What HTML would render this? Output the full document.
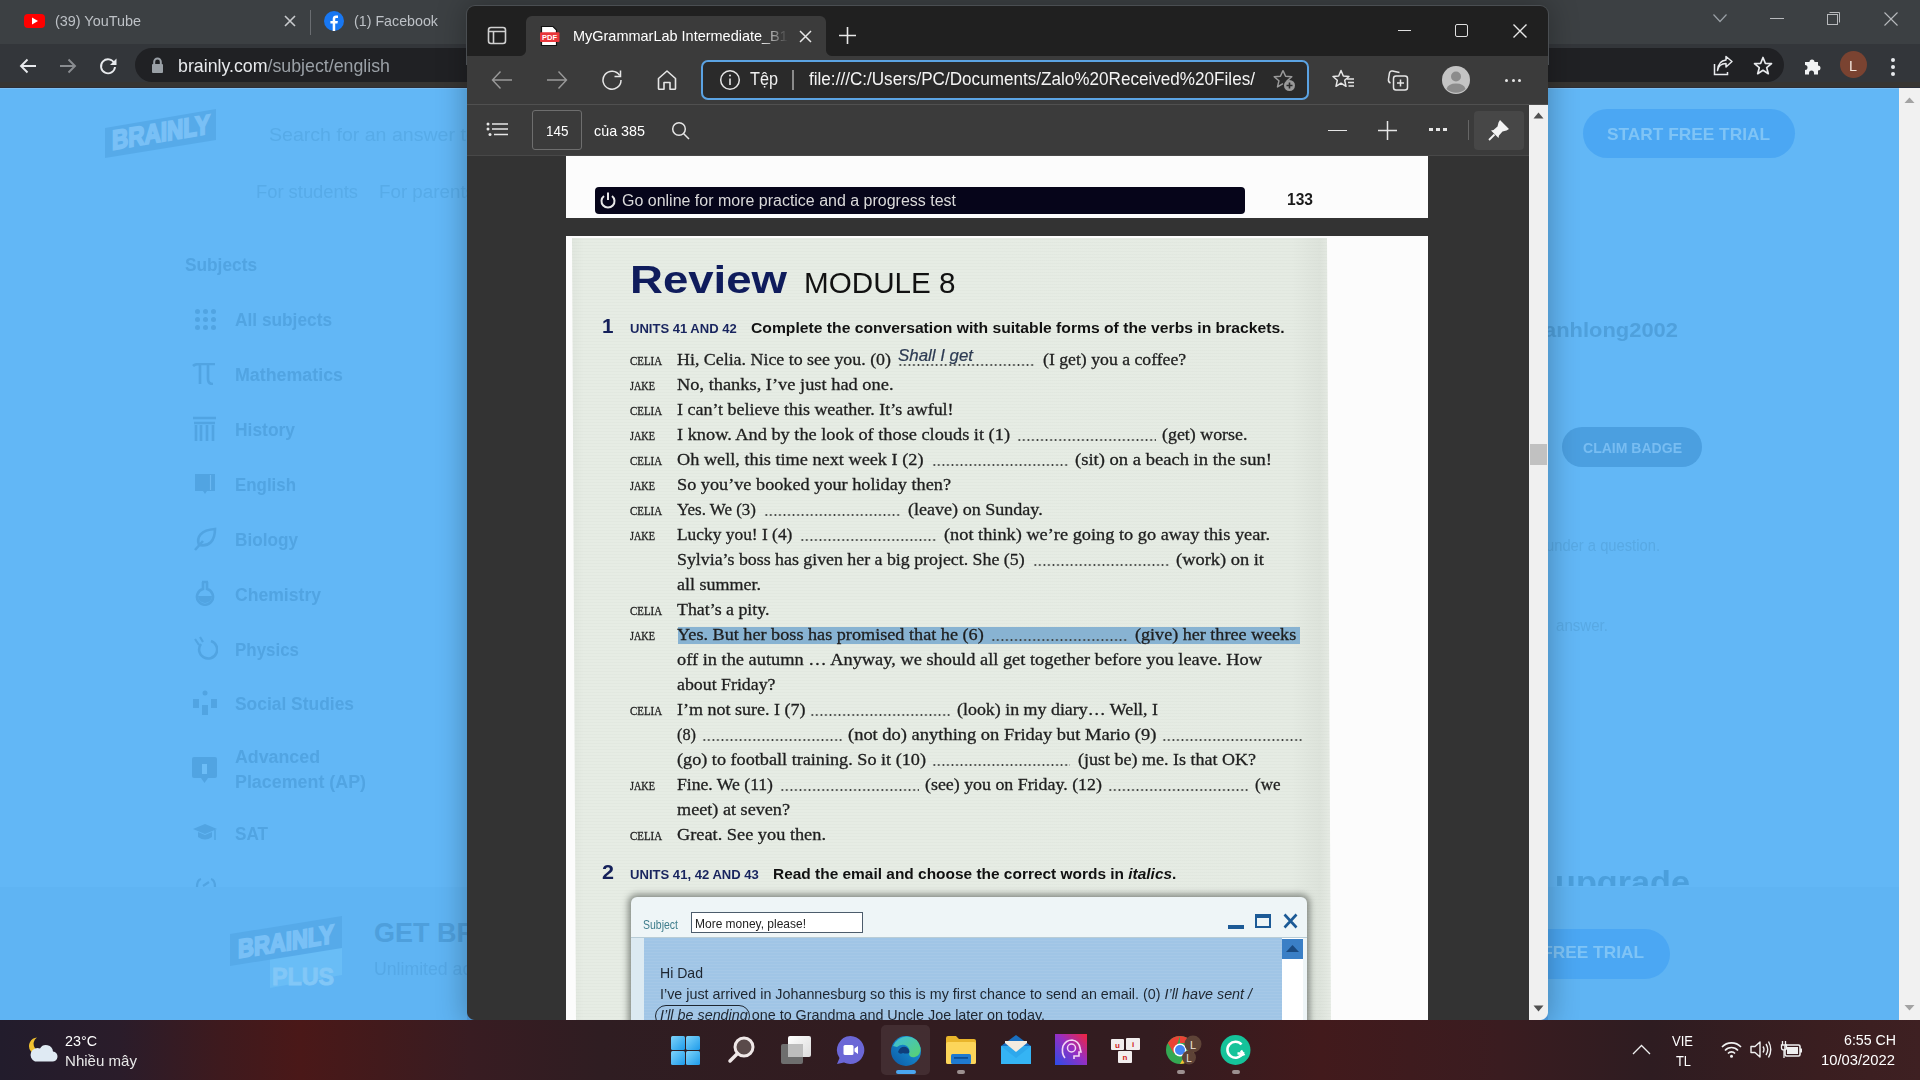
<!DOCTYPE html>
<html><head><meta charset="utf-8"><title>screen</title>
<style>
html,body{margin:0;padding:0;width:1920px;height:1080px;overflow:hidden;background:#62b7f6;position:relative;font-family:"Liberation Sans",sans-serif}
</style></head><body>
<div style="position:absolute;left:0px;top:0px;width:1920px;height:44px;background:#3c4043"></div><div style="position:absolute;left:0px;top:44px;width:1920px;height:38px;background:#33363a"></div><div style="position:absolute;left:0px;top:82px;width:1920px;height:6px;background:#373532"></div><div style="position:absolute;left:0px;top:87px;width:1920px;height:1px;background:#2c2f3a"></div><div style="position:absolute;left:24px;top:14px;width:21px;height:14px;background:#f00;border-radius:4px"></div><svg style="position:absolute;left:31px;top:17px" width="8" height="8"><path d="M1 0.5 L7 4 L1 7.5Z" fill="#fff"/></svg><span style="position:absolute;left:55px;top:11.80px;white-space:pre;line-height:15px;font:400 15px 'Liberation Sans', sans-serif;color:#bdc1c6;transform-origin:0 0;transform:scaleX(0.9606);">(39) YouTube</span><svg style="position:absolute;left:284px;top:15px" width="12" height="12"><path d="M1 1L11 11M11 1L1 11" stroke="#c8cacd" stroke-width="1.6"/></svg><div style="position:absolute;left:310px;top:10px;width:1px;height:25px;background:#6a6d71"></div><svg style="position:absolute;left:324px;top:11px" width="20" height="20" viewBox="0 0 20 20"><circle cx="10" cy="10" r="10" fill="#1877f2"/><path d="M11.2 20V12.6h2.3l.4-2.7h-2.7V8.2c0-.8.3-1.3 1.4-1.3h1.4V4.5c-.3 0-1.1-.1-2-.1-2 0-3.3 1.200-3.3 3.4v2.1H6.400v2.700h2.300V20z" fill="#fff"/></svg><span style="position:absolute;left:354px;top:11.80px;white-space:pre;line-height:15px;font:400 15px 'Liberation Sans', sans-serif;color:#bdc1c6;transform-origin:0 0;transform:scaleX(0.9505);">(1) Facebook</span><svg style="position:absolute;left:1712px;top:13px" width="16" height="11"><path d="M1.5 1.5L8 8.5L14.5 1.5" stroke="#9aa0a6" fill="none" stroke-width="1.2"/></svg><div style="position:absolute;left:1770px;top:18px;width:14px;height:1px;background:#b8babd"></div><svg style="position:absolute;left:1826px;top:11px" width="16" height="16"><rect x="1.5" y="3.5" width="10" height="10" fill="none" stroke="#b8babd" stroke-width="1"/><path d="M3.5 1.5H13.5V11.5" fill="none" stroke="#b8babd" stroke-width="1"/></svg><svg style="position:absolute;left:1883px;top:11px" width="16" height="16"><path d="M1.5 1.5L14.5 14.5M14.5 1.5L1.5 14.5" stroke="#b8babd" stroke-width="1.1"/></svg><svg style="position:absolute;left:17px;top:55px" width="22" height="22" viewBox="0 0 22 22"><path d="M19 11H4M10.5 4.5L4 11L10.5 17.5" stroke="#e8eaed" stroke-width="1.9" fill="none"/></svg><svg style="position:absolute;left:57px;top:55px" width="22" height="22" viewBox="0 0 22 22"><path d="M3 11H18M11.5 4.5L18 11L11.5 17.5" stroke="#8a8d91" stroke-width="1.9" fill="none"/></svg><svg style="position:absolute;left:97px;top:55px" width="22" height="22" viewBox="0 0 22 22"><path d="M17.3 8.2A7 7 0 1 0 18 12" stroke="#e8eaed" stroke-width="1.9" fill="none"/><path d="M19.5 3.5V10H13Z" fill="#e8eaed"/></svg><div style="position:absolute;left:135px;top:48px;width:1649px;height:34px;background:#202124;border-radius:17px"></div><svg style="position:absolute;left:151px;top:57px" width="13" height="17" viewBox="0 0 13 17"><path d="M3.2 7V4.8a3.3 3.300 0 0 1 6.600 0V7" stroke="#9aa0a6" stroke-width="2" fill="none"/><rect x="1" y="7" width="11" height="9" rx="1" fill="#9aa0a6"/></svg><span style="position:absolute;left:178px;top:55.12px;white-space:pre;line-height:19px;font:400 19px 'Liberation Sans', sans-serif;color:#9aa0a6;transform-origin:0 0;transform:scaleX(0.9351);"><span style="color:#e8eaed">brainly.com</span>/subject/english</span><svg style="position:absolute;left:1712px;top:55px" width="22" height="22" viewBox="0 0 22 22"><path d="M2.5 9V19.500H15.5V17" stroke="#e8eaed" stroke-width="1.5" fill="none"/><path d="M5.5 15.5C6.500 10.500 10 8.500 14 8.500V12L20 6.500L14 1.500V5C9 5.500 6 9 5.500 15.500Z" stroke="#e8eaed" stroke-width="1.5" fill="none" stroke-linejoin="round"/></svg><svg style="position:absolute;left:1752px;top:55px" width="22" height="22" viewBox="0 0 22 22"><path d="M11 2.5L13.300 8.300L19.500 8.700L14.700 12.600L16.300 18.700L11 15.300L5.700 18.700L7.300 12.600L2.500 8.700L8.700 8.300Z" stroke="#e8eaed" stroke-width="1.7" fill="none" stroke-linejoin="round"/></svg><svg style="position:absolute;left:1802px;top:55px" width="22" height="22" viewBox="0 0 22 22"><path d="M3 7H7.500A2.500 2.500 0 1 1 12.500 7H16V10.500A2.500 2.500 0 1 1 16 15.500V19.500H12V18A2.500 2.500 0 1 0 7 18V19.500H3V15A2.500 2.500 0 1 0 3 10Z" fill="#f1f3f4"/></svg><div style="position:absolute;left:1840px;top:51px;width:27px;height:27px;background:#7a4331;border-radius:50%"></div><span style="position:absolute;left:1849px;top:57.30px;white-space:pre;line-height:15px;font:400 15px 'Liberation Sans', sans-serif;color:#f3e6dc;transform-origin:0 0;transform:scaleX(0.9588);">L</span><div style="position:absolute;left:1891px;top:58px;width:4px;height:4px;background:#e8eaed;border-radius:50%"></div><div style="position:absolute;left:1891px;top:65px;width:4px;height:4px;background:#e8eaed;border-radius:50%"></div><div style="position:absolute;left:1891px;top:72px;width:4px;height:4px;background:#e8eaed;border-radius:50%"></div><div style="position:absolute;left:1899px;top:88px;width:21px;height:932px;background:#f1f1f1"></div><svg style="position:absolute;left:1904px;top:96px" width="11" height="8"><path d="M0.5 7L5.500 1.500L10.500 7Z" fill="#a3a3a3"/></svg><svg style="position:absolute;left:1904px;top:1004px" width="11" height="8"><path d="M0.5 1L5.500 6.500L10.500 1Z" fill="#a3a3a3"/></svg><div style="position:absolute;left:0px;top:88px;width:1899px;height:932px;background:#62b7f6"></div><div style="position:absolute;left:0px;top:887px;width:1899px;height:133px;background:#5fb4f3"></div><div style="position:absolute;left:0px;top:88px;width:1899px;height:1px;background:#7cbff2"></div><svg style="position:absolute;left:100px;top:105px" width="125" height="60" viewBox="100 105 125 60"><path d="M105 128L216 109L216 140L105 158Z" fill="#56aae9"/><text x="112" y="150" transform="skewY(-9.5) translate(0 18.5)" font-family="Liberation Sans" font-weight="700" font-size="27" fill="#79c0f6" stroke="#79c0f6" stroke-width="2" textLength="98" lengthAdjust="spacingAndGlyphs">BRAINLY</text></svg><span style="position:absolute;left:269px;top:123.92px;white-space:pre;line-height:19px;font:400 19px 'Liberation Sans', sans-serif;color:#57abe8;transform-origin:0 0;transform:scaleX(1.03);">Search for an answer to any question...</span><span style="position:absolute;left:256px;top:181.76px;white-space:pre;line-height:18px;font:400 18px 'Liberation Sans', sans-serif;color:#57abe8;transform-origin:0 0;transform:scaleX(1.0195);">For students</span><span style="position:absolute;left:379px;top:181.76px;white-space:pre;line-height:18px;font:400 18px 'Liberation Sans', sans-serif;color:#57abe8;transform-origin:0 0;transform:scaleX(1.0429);">For parents</span><span style="position:absolute;left:185px;top:255.46px;white-space:pre;line-height:18px;font:700 18px 'Liberation Sans', sans-serif;color:#51a4e2;transform-origin:0 0;transform:scaleX(0.9596);">Subjects</span><span style="position:absolute;left:235px;top:310.46px;white-space:pre;line-height:18px;font:700 18px 'Liberation Sans', sans-serif;color:#51a4e2;transform-origin:0 0;transform:scaleX(0.9601);">All subjects</span><span style="position:absolute;left:235px;top:365.46px;white-space:pre;line-height:18px;font:700 18px 'Liberation Sans', sans-serif;color:#51a4e2;transform-origin:0 0;transform:scaleX(0.9904);">Mathematics</span><span style="position:absolute;left:235px;top:420.46px;white-space:pre;line-height:18px;font:700 18px 'Liberation Sans', sans-serif;color:#51a4e2;transform-origin:0 0;transform:scaleX(0.9675);">History</span><span style="position:absolute;left:235px;top:475.46px;white-space:pre;line-height:18px;font:700 18px 'Liberation Sans', sans-serif;color:#51a4e2;transform-origin:0 0;transform:scaleX(0.9382);">English</span><span style="position:absolute;left:235px;top:530.46px;white-space:pre;line-height:18px;font:700 18px 'Liberation Sans', sans-serif;color:#51a4e2;transform-origin:0 0;transform:scaleX(0.9545);">Biology</span><span style="position:absolute;left:235px;top:585.46px;white-space:pre;line-height:18px;font:700 18px 'Liberation Sans', sans-serif;color:#51a4e2;transform-origin:0 0;transform:scaleX(0.9769);">Chemistry</span><span style="position:absolute;left:235px;top:640.46px;white-space:pre;line-height:18px;font:700 18px 'Liberation Sans', sans-serif;color:#51a4e2;transform-origin:0 0;transform:scaleX(0.9405);">Physics</span><span style="position:absolute;left:235px;top:694.16px;white-space:pre;line-height:18px;font:700 18px 'Liberation Sans', sans-serif;color:#51a4e2;transform-origin:0 0;transform:scaleX(0.9671);">Social Studies</span><span style="position:absolute;left:235px;top:824.46px;white-space:pre;line-height:18px;font:700 18px 'Liberation Sans', sans-serif;color:#51a4e2;transform-origin:0 0;transform:scaleX(0.9518);">SAT</span><span style="position:absolute;left:235px;top:746.76px;white-space:pre;line-height:18px;font:700 18px 'Liberation Sans', sans-serif;color:#51a4e2;transform-origin:0 0;transform:scaleX(0.9880);">Advanced</span><span style="position:absolute;left:235px;top:771.56px;white-space:pre;line-height:18px;font:700 18px 'Liberation Sans', sans-serif;color:#51a4e2;transform-origin:0 0;transform:scaleX(0.9921);">Placement (AP)</span><div style="position:absolute;left:195px;top:309px;width:5px;height:5px;background:#51a4e2;border-radius:50%"></div><div style="position:absolute;left:195px;top:317px;width:5px;height:5px;background:#51a4e2;border-radius:50%"></div><div style="position:absolute;left:195px;top:325px;width:5px;height:5px;background:#51a4e2;border-radius:50%"></div><div style="position:absolute;left:203px;top:309px;width:5px;height:5px;background:#51a4e2;border-radius:50%"></div><div style="position:absolute;left:203px;top:317px;width:5px;height:5px;background:#51a4e2;border-radius:50%"></div><div style="position:absolute;left:203px;top:325px;width:5px;height:5px;background:#51a4e2;border-radius:50%"></div><div style="position:absolute;left:211px;top:309px;width:5px;height:5px;background:#51a4e2;border-radius:50%"></div><div style="position:absolute;left:211px;top:317px;width:5px;height:5px;background:#51a4e2;border-radius:50%"></div><div style="position:absolute;left:211px;top:325px;width:5px;height:5px;background:#51a4e2;border-radius:50%"></div><svg style="position:absolute;left:192px;top:363px" width="24" height="22"><path d="M1 3Q3 1 7 1H23M8 1V21M16 1V16Q16 21 21 21" stroke="#51a4e2" stroke-width="2.6" fill="none"/></svg><svg style="position:absolute;left:193px;top:416px" width="23" height="26"><path d="M0 2H23M1 7H22M3 9V25M8 9V25M14 9V25M20 9V25" stroke="#51a4e2" stroke-width="2.6" fill="none"/></svg><svg style="position:absolute;left:195px;top:474px" width="21" height="21"><path d="M0 0H20V17H12L10 20L8 17H0Z" fill="#51a4e2"/><path d="M15.500 1V16" stroke="#6ab9f4" stroke-width="1.200"/></svg><svg style="position:absolute;left:193px;top:527px" width="24" height="24"><path d="M2 23L10 14M6 18C3 10 8 3 22 2C22 14 16 20 6 18Z" stroke="#51a4e2" stroke-width="2.6" fill="none"/></svg><svg style="position:absolute;left:194px;top:580px" width="22" height="26"><path d="M8 2H14M9 2V9A8 8 0 1 0 13 9V2" stroke="#51a4e2" stroke-width="2.6" fill="none"/><path d="M4 16H18A7 7 0 0 1 4 16Z" fill="#51a4e2"/></svg><svg style="position:absolute;left:193px;top:636px" width="25" height="26"><path d="M8 8A9 9 0 1 0 18 5" stroke="#51a4e2" stroke-width="2.6" fill="none"/><path d="M2 3L6 9M7 1L10 6" stroke="#51a4e2" stroke-width="2.2"/></svg><svg style="position:absolute;left:192px;top:690px" width="26" height="26"><circle cx="13" cy="3" r="2.5" fill="#51a4e2"/><rect x="1" y="9" width="6" height="9" fill="#51a4e2"/><rect x="19" y="9" width="6" height="9" fill="#51a4e2"/><rect x="10" y="15" width="6" height="10" fill="#51a4e2"/></svg><svg style="position:absolute;left:192px;top:757px" width="25" height="26"><rect x="0" y="0" width="25" height="21" rx="2" fill="#51a4e2"/><path d="M9 21L12.500 26L16 21Z" fill="#51a4e2"/><rect x="10" y="7" width="5" height="10" fill="#6cbdf7"/></svg><svg style="position:absolute;left:193px;top:823px" width="25" height="26"><path d="M0 6L12 1L24 6L12 11Z" fill="#51a4e2"/><path d="M5 9V14Q12 19 19 14V9L12 12Z" fill="#51a4e2"/><path d="M22 7V17" stroke="#51a4e2" stroke-width="1.500"/></svg><svg style="position:absolute;left:195px;top:877px" width="22" height="10"><path d="M2 10Q2 3 6 2M20 10Q20 3 16 2M8 9L14 5" stroke="#51a4e2" stroke-width="2.200" fill="none"/></svg><svg style="position:absolute;left:225px;top:910px" width="125" height="85" viewBox="225 910 125 85"><path d="M270 946L342 934L342 975L270 988Z" fill="#69bdf6"/><path d="M230 934L342 916L342 948L230 966Z" fill="#56aae9"/><text x="238" y="958" transform="skewY(-9) translate(0 0)" font-family="Liberation Sans" font-weight="700" font-size="26" fill="#79c0f6" stroke="#79c0f6" stroke-width="2" textLength="96" lengthAdjust="spacingAndGlyphs" style="transform-box:fill-box">BRAINLY</text><text x="272" y="985" font-family="Liberation Sans" font-weight="700" font-size="24" fill="#82c7f7" stroke="#82c7f7" stroke-width="1" textLength="62" lengthAdjust="spacingAndGlyphs">PLUS</text></svg><span style="position:absolute;left:374px;top:917.64px;white-space:pre;line-height:27px;font:700 27px 'Liberation Sans', sans-serif;color:#4e9fdc;transform-origin:0 0;transform:scaleX(1.0);">GET BRAINLY PLUS</span><span style="position:absolute;left:374px;top:957.92px;white-space:pre;line-height:19px;font:400 19px 'Liberation Sans', sans-serif;color:#55a8e6;transform-origin:0 0;transform:scaleX(0.93);">Unlimited access to all answers</span><div style="position:absolute;left:1583px;top:109px;width:212px;height:49px;background:#4ba7f3;border-radius:25px"></div><span style="position:absolute;left:1607px;top:124.61px;white-space:pre;line-height:17px;font:700 17px 'Liberation Sans', sans-serif;color:#7fc4f6;transform-origin:0 0;transform:scaleX(1.0173);">START FREE TRIAL</span><span style="position:absolute;left:1544px;top:318.77px;white-space:pre;line-height:20px;font:700 20px 'Liberation Sans', sans-serif;color:#4fa0dc;transform-origin:0 0;transform:scaleX(1.0960);">anhlong2002</span><div style="position:absolute;left:1562px;top:427px;width:140px;height:40px;background:#4b9fe0;border-radius:20px"></div><span style="position:absolute;left:1583px;top:439.30px;white-space:pre;line-height:15px;font:700 15px 'Liberation Sans', sans-serif;color:#78bdf2;transform-origin:0 0;transform:scaleX(0.9355);">CLAIM BADGE</span><span style="position:absolute;left:1546px;top:536.96px;white-space:pre;line-height:16px;font:400 16px 'Liberation Sans', sans-serif;color:#58a9e4;transform-origin:0 0;transform:scaleX(0.9219);">under a question.</span><span style="position:absolute;left:1556px;top:616.96px;white-space:pre;line-height:16px;font:400 16px 'Liberation Sans', sans-serif;color:#58a9e4;transform-origin:0 0;transform:scaleX(0.9430);">answer.</span><div style="position:absolute;left:1500px;top:860px;width:300px;height:26px;overflow:hidden"><span style="position:absolute;left:55px;top:4.76px;white-space:pre;line-height:31px;font:700 31px 'Liberation Sans', sans-serif;color:#4b9fdc;transform-origin:0 0;transform:scaleX(1.1039);">upgrade</span></div><div style="position:absolute;left:1450px;top:929px;width:220px;height:50px;background:#4ba7f3;border-radius:25px"></div><span style="position:absolute;left:1481px;top:943.11px;white-space:pre;line-height:17px;font:700 17px 'Liberation Sans', sans-serif;color:#7fc4f6;transform-origin:0 0;transform:scaleX(1.0173);">START FREE TRIAL</span><div style="position:absolute;left:467px;top:6px;width:1081px;height:1014px;border-radius:8px 8px 0 0;box-shadow:0 0 28px 3px rgba(0,0,0,0.26)"></div><div style="position:absolute;left:466px;top:5px;width:1083px;height:60px;background:#4a4e52;border-radius:9px 9px 0 0"></div><div style="position:absolute;left:467px;top:6px;width:1081px;height:60px;background:#202020;border-radius:8px 8px 0 0"></div><svg style="position:absolute;left:487px;top:26px" width="20" height="20" viewBox="0 0 20 20"><rect x="1.5" y="1.500" width="17" height="16" rx="2.500" stroke="#d0d0d0" stroke-width="1.6" fill="none"/><path d="M1.500 5.500H18.500M6.500 5.500V17.500" stroke="#d0d0d0" stroke-width="1.600"/></svg><div style="position:absolute;left:526px;top:16px;width:300px;height:42px;background:#3b3b3b;border-radius:6px 6px 0 0"></div><div style="position:absolute;left:520px;top:50px;width:6px;height:6px;background:radial-gradient(circle at 0 0,#202020 5.5px,#3b3b3b 6.5px)"></div><div style="position:absolute;left:826px;top:50px;width:6px;height:6px;background:radial-gradient(circle at 100% 0,#202020 5.5px,#3b3b3b 6.5px)"></div><svg style="position:absolute;left:539px;top:25px" width="22" height="22" viewBox="0 0 22 22"><path d="M2.500 1.500H14L17.500 5V20.500H2.500Z" fill="#fff" stroke="#111" stroke-width="1.200"/><rect x="1" y="7.200" width="19.500" height="9.800" rx="1" fill="#e8353a"/><text x="10.500" y="15" text-anchor="middle" font-family="Liberation Sans" font-weight="700" font-size="7.5" fill="#fff">PDF</text></svg><div style="position:absolute;left:570px;top:20px;width:220px;height:34px;overflow:hidden;-webkit-mask-image:linear-gradient(90deg,#000 190px,transparent 218px)"><span style="position:absolute;left:2.5px;top:7.30px;white-space:pre;line-height:15px;font:400 15px 'Liberation Sans', sans-serif;color:#ffffff;transform-origin:0 0;transform:scaleX(0.965);">MyGrammarLab Intermediate_B1 .pdf</span></div><svg style="position:absolute;left:799px;top:30px" width="13" height="13"><path d="M1 1L12 12M12 1L1 12" stroke="#e8e8e8" stroke-width="1.500"/></svg><svg style="position:absolute;left:838px;top:26px" width="19" height="19"><path d="M9.500 1V18M1 9.500H18" stroke="#e8e8e8" stroke-width="1.600"/></svg><div style="position:absolute;left:1398px;top:30px;width:13px;height:1.3px;background:#e0e0e0"></div><div style="position:absolute;left:1455px;top:24px;width:13px;height:13px;border:1.3px solid #e0e0e0;border-radius:2px;box-sizing:border-box"></div><svg style="position:absolute;left:1512px;top:23px" width="16" height="16"><path d="M1.500 1.500L14.500 14.500M14.500 1.500L1.500 14.500" stroke="#e8e8e8" stroke-width="1.400"/></svg><div style="position:absolute;left:467px;top:56px;width:1081px;height:49px;background:#3b3b3b"></div><div style="position:absolute;left:467px;top:104px;width:1081px;height:1px;background:#505050"></div><svg style="position:absolute;left:491px;top:69px" width="22" height="22" viewBox="0 0 22 22"><path d="M21 11H1.500M9.500 2.500L1.500 11L9.500 19.500" stroke="#9a9a9a" stroke-width="1.400" fill="none"/></svg><svg style="position:absolute;left:546px;top:69px" width="22" height="22" viewBox="0 0 22 22"><path d="M1 11H20.500M12.500 2.500L20.500 11L12.500 19.500" stroke="#9a9a9a" stroke-width="1.400" fill="none"/></svg><svg style="position:absolute;left:601px;top:69px" width="22" height="22" viewBox="0 0 22 22"><path d="M18.700 6.500A9 9 0 1 0 20 11" stroke="#e6e6e6" stroke-width="1.500" fill="none"/><path d="M19.500 1.500V7.500H13.500" stroke="#e6e6e6" stroke-width="1.500" fill="none"/></svg><svg style="position:absolute;left:656px;top:69px" width="22" height="22" viewBox="0 0 22 22"><path d="M2.500 9.500L11 2L19.500 9.500V19.500Q19.500 20.300 18.700 20.300H14V13.500H8V20.300H3.300Q2.500 20.300 2.500 19.500Z" stroke="#e6e6e6" stroke-width="1.600" fill="none" stroke-linejoin="round"/></svg><div style="position:absolute;left:701px;top:60px;width:608px;height:40px;background:#2a2a2a;border:2.5px solid #5ba3e3;border-radius:7px;box-sizing:border-box"></div><svg style="position:absolute;left:719px;top:69px" width="22" height="22" viewBox="0 0 22 22"><circle cx="11" cy="11" r="9.300" stroke="#e6e6e6" stroke-width="1.500" fill="none"/><path d="M11 9.500V16" stroke="#e6e6e6" stroke-width="1.600"/><circle cx="11" cy="6.500" r="1" fill="#e6e6e6"/></svg><span style="position:absolute;left:750px;top:69.26px;white-space:pre;line-height:18px;font:400 18px 'Liberation Sans', sans-serif;color:#f0f0f0;transform-origin:0 0;transform:scaleX(0.9023);">Tệp</span><div style="position:absolute;left:792px;top:70px;width:1.5px;height:20px;background:#8a8a8a"></div><span style="position:absolute;left:809px;top:69.26px;white-space:pre;line-height:18px;font:400 18px 'Liberation Sans', sans-serif;color:#f4f4f4;transform-origin:0 0;transform:scaleX(0.9506);">file:///C:/Users/PC/Documents/Zalo%20Received%20Files/</span><svg style="position:absolute;left:1272px;top:69px" width="24" height="23" viewBox="0 0 24 23"><path d="M11 1.500L13.600 7.300L19.800 7.800L15.100 11.800L16.500 17.900" stroke="#9a9a9a" stroke-width="1.500" fill="none" stroke-linejoin="round"/><path d="M11 1.500L8.400 7.300L2.200 7.800L6.900 11.800L5.500 17.900L11 14.700" stroke="#9a9a9a" stroke-width="1.500" fill="none" stroke-linejoin="round"/><circle cx="17.500" cy="16.500" r="5.500" fill="#9a9a9a"/><path d="M17.500 13.500V19.500M14.500 16.500H20.500" stroke="#2a2a2a" stroke-width="1.600"/></svg><svg style="position:absolute;left:1332px;top:69px" width="24" height="22" viewBox="0 0 24 22"><path d="M9 1.500L11.300 7L17 7.500L12.700 11.300L14 17.300L9 14.200L4 17.300L5.300 11.300L1 7.500L6.700 7Z" stroke="#e6e6e6" stroke-width="1.500" fill="none" stroke-linejoin="round"/><path d="M15 10H22M16 13.500H22M16.500 17H22" stroke="#e6e6e6" stroke-width="1.500"/></svg><svg style="position:absolute;left:1387px;top:69px" width="22" height="22" viewBox="0 0 22 22"><path d="M3.500 14Q1 13 1.500 10L2.500 4Q3 1.500 5.500 2L12.500 3.500" stroke="#e6e6e6" stroke-width="1.500" fill="none"/><rect x="6.500" y="7" width="14" height="14" rx="2.500" stroke="#e6e6e6" stroke-width="1.500" fill="none"/><path d="M13.500 10.500V17.500M10 14H17" stroke="#e6e6e6" stroke-width="1.500"/></svg><svg style="position:absolute;left:1442px;top:66px" width="28" height="28" viewBox="0 0 28 28"><circle cx="14" cy="14" r="14" fill="#c4c4c4"/><circle cx="14" cy="10.500" r="5" fill="#8c8c8c"/><path d="M4.500 23Q6 17.500 14 17.500Q22 17.500 23.500 23A14 14 0 0 1 4.500 23Z" fill="#8c8c8c"/></svg><div style="position:absolute;left:1505px;top:78.5px;width:3.2px;height:3.2px;background:#e6e6e6;border-radius:50%"></div><div style="position:absolute;left:1511.5px;top:78.5px;width:3.2px;height:3.2px;background:#e6e6e6;border-radius:50%"></div><div style="position:absolute;left:1518px;top:78.5px;width:3.2px;height:3.2px;background:#e6e6e6;border-radius:50%"></div><div style="position:absolute;left:467px;top:105px;width:1062px;height:50px;background:#3b3b3b"></div><div style="position:absolute;left:467px;top:155px;width:1062px;height:1px;background:#484848"></div><svg style="position:absolute;left:486px;top:122px" width="23" height="15" viewBox="0 0 23 15"><circle cx="2" cy="2" r="1.500" fill="#e6e6e6"/><circle cx="2" cy="7" r="1.500" fill="#e6e6e6"/><circle cx="4" cy="12.500" r="1.500" fill="#e6e6e6"/><path d="M6 2H22M6 7H22M8 12.500H22" stroke="#e6e6e6" stroke-width="1.500"/></svg><div style="position:absolute;left:532px;top:110px;width:50px;height:40px;border:1px solid #6e6e6e;border-radius:3px;box-sizing:border-box"></div><span style="position:absolute;left:545.5px;top:121.90px;white-space:pre;line-height:15px;font:400 15px 'Liberation Sans', sans-serif;color:#ffffff;transform-origin:0 0;transform:scaleX(0.8989);">145</span><span style="position:absolute;left:594px;top:121.90px;white-space:pre;line-height:15px;font:400 15px 'Liberation Sans', sans-serif;color:#ffffff;transform-origin:0 0;transform:scaleX(0.9552);">của 385</span><svg style="position:absolute;left:671px;top:121px" width="20" height="20" viewBox="0 0 20 20"><circle cx="8" cy="8" r="6.300" stroke="#e6e6e6" stroke-width="1.500" fill="none"/><path d="M12.500 12.500L18 18" stroke="#e6e6e6" stroke-width="1.500"/></svg><div style="position:absolute;left:1328px;top:129.5px;width:18.5px;height:1.5px;background:#e6e6e6"></div><svg style="position:absolute;left:1377px;top:120px" width="21" height="21"><path d="M10.500 1V20M1 10.500H20" stroke="#e6e6e6" stroke-width="1.500"/></svg><div style="position:absolute;left:1429px;top:127.5px;width:3.5px;height:3.5px;background:#e6e6e6"></div><div style="position:absolute;left:1436px;top:127.5px;width:3.5px;height:3.5px;background:#e6e6e6"></div><div style="position:absolute;left:1443px;top:127.5px;width:3.5px;height:3.5px;background:#e6e6e6"></div><div style="position:absolute;left:1468px;top:120px;width:1px;height:20px;background:#666"></div><div style="position:absolute;left:1474px;top:111px;width:50px;height:39px;background:#474747;border-radius:4px"></div><svg style="position:absolute;left:1487px;top:118px" width="24" height="24" viewBox="0 0 24 24"><path d="M13 2L22 11L19.500 12.500L15.500 13.500L12 17.500L11.500 20L4 12.500L6.500 12L10.500 8.500L11.500 4.500Z" fill="#f4f4f4"/><path d="M7.500 16.500L2 22" stroke="#f4f4f4" stroke-width="1.800"/></svg><div style="position:absolute;left:467px;top:156px;width:1062px;height:864px;background:#333333"></div><div style="position:absolute;left:1529px;top:105px;width:19px;height:915px;background:#f0f0f0"></div><svg style="position:absolute;left:1533px;top:112px" width="11" height="7"><path d="M0.500 6.500L5.500 0.500L10.500 6.500Z" fill="#505050"/></svg><div style="position:absolute;left:1530px;top:444px;width:17px;height:21px;background:#c1c1c1"></div><svg style="position:absolute;left:1533px;top:1005px" width="11" height="7"><path d="M0.500 0.500L5.500 6.500L10.500 0.500Z" fill="#505050"/></svg><div style="position:absolute;left:1540px;top:1012px;width:8px;height:8px;background:radial-gradient(circle at 0 0,transparent 7.5px,#4a93d3 8.5px)"></div><div style="position:absolute;left:467px;top:1012px;width:8px;height:8px;background:radial-gradient(circle at 100% 0,transparent 7.5px,#4c92d0 8.5px)"></div><div style="position:absolute;left:566px;top:156px;width:862px;height:62px;background:#fcfcfc"></div><div style="position:absolute;left:595px;top:187px;width:650px;height:27px;background:#06051a;border-radius:4px"></div><svg style="position:absolute;left:599px;top:191px" width="18" height="19" viewBox="0 0 18 19"><path d="M5 5A6.500 6.500 0 1 0 13 5" stroke="#e8e8e8" stroke-width="2" fill="none"/><path d="M9 1.500V9" stroke="#e8e8e8" stroke-width="2"/></svg><span style="position:absolute;left:622px;top:192.46px;white-space:pre;line-height:16px;font:400 16px 'Liberation Sans', sans-serif;color:#dadada;transform-origin:0 0;transform:scaleX(0.9988);">Go online for more practice and a progress test</span><span style="position:absolute;left:1287px;top:190.96px;white-space:pre;line-height:16px;font:700 16px 'Liberation Sans', sans-serif;color:#1a1a1a;transform-origin:0 0;transform:scaleX(0.9737);">133</span><div style="position:absolute;left:566px;top:236px;width:862px;height:784px;background:#fcfcfc"></div><div style="position:absolute;left:572px;top:238px;width:760px;height:782px;clip-path:polygon(0 0,755px 0,759px 782px,4px 782px);background:repeating-linear-gradient(0deg,rgba(120,130,120,0.035) 0 1px,transparent 1px 3px),linear-gradient(90deg,#e0e6de 0px,#e6ece4 12px,#e6ece4 400px,#e5ebe3 720px,#dde3db 748px,#e6ebe4 759px)"></div><span style="position:absolute;left:629.5px;top:258.83px;white-space:pre;line-height:38px;font:700 38px 'Liberation Sans', sans-serif;color:#0f1c5c;transform-origin:0 0;transform:scaleX(1.1988);">Review</span><span style="position:absolute;left:803.5px;top:266.03px;white-space:pre;line-height:29.5px;font:400 29.5px 'Liberation Sans', sans-serif;color:#111111;transform-origin:0 0;transform:scaleX(1.0045);">MODULE 8</span><span style="position:absolute;left:602.3px;top:314.42px;white-space:pre;line-height:21px;font:700 21px 'Liberation Sans', sans-serif;color:#14205a;transform-origin:0 0;transform:scaleX(0.9840);">1</span><span style="position:absolute;left:630.3px;top:321.40px;white-space:pre;line-height:13px;font:700 13px 'Liberation Sans', sans-serif;color:#18245e;transform-origin:0 0;transform:scaleX(1.0025);">UNITS 41 AND 42</span><span style="position:absolute;left:751px;top:319.28px;white-space:pre;line-height:15.5px;font:700 15.5px 'Liberation Sans', sans-serif;color:#111111;transform-origin:0 0;transform:scaleX(1.0121);">Complete the conversation with suitable forms of the verbs in brackets.</span><span style="position:absolute;left:630px;top:354.67px;white-space:pre;line-height:11.5px;font:400 11.5px 'Liberation Serif', serif;color:#222;transform-origin:0 0;transform:scaleX(0.9451);-webkit-text-stroke:0.3px #222;">CELIA</span><span style="position:absolute;left:677px;top:350.06px;white-space:pre;line-height:17px;font:400 17px 'Liberation Serif', serif;color:#1e1e1e;transform-origin:0 0;transform:scaleX(1.0518);-webkit-text-stroke:0.3px #1e1e1e;">Hi, Celia. Nice to see you. (0)</span><div style="position:absolute;left:898px;top:364.40000000000003px;width:137px;height:2px;background:radial-gradient(circle,#3a3c3a 0.85px,transparent 1.15px) 0 0/4.55px 2px repeat-x"></div><span style="position:absolute;left:898px;top:345.81px;white-space:pre;line-height:17px;font:italic 400 17px 'Liberation Sans', sans-serif;color:#2c3a52;transform-origin:0 0;transform:scaleX(0.9919);-webkit-text-stroke:0.2px #2c3a52;">Shall I get</span><span style="position:absolute;left:1042.5px;top:350.06px;white-space:pre;line-height:17px;font:400 17px 'Liberation Serif', serif;color:#1e1e1e;transform-origin:0 0;transform:scaleX(1.0415);-webkit-text-stroke:0.3px #1e1e1e;">(I get) you a coffee?</span><span style="position:absolute;left:630px;top:379.67px;white-space:pre;line-height:11.5px;font:400 11.5px 'Liberation Serif', serif;color:#222;transform-origin:0 0;transform:scaleX(0.8889);-webkit-text-stroke:0.3px #222;">JAKE</span><span style="position:absolute;left:677px;top:375.06px;white-space:pre;line-height:17px;font:400 17px 'Liberation Serif', serif;color:#1e1e1e;transform-origin:0 0;transform:scaleX(1.0815);-webkit-text-stroke:0.3px #1e1e1e;">No, thanks, I’ve just had one.</span><span style="position:absolute;left:630px;top:404.67px;white-space:pre;line-height:11.5px;font:400 11.5px 'Liberation Serif', serif;color:#222;transform-origin:0 0;transform:scaleX(0.9451);-webkit-text-stroke:0.3px #222;">CELIA</span><span style="position:absolute;left:677px;top:400.06px;white-space:pre;line-height:17px;font:400 17px 'Liberation Serif', serif;color:#1e1e1e;transform-origin:0 0;transform:scaleX(1.0570);-webkit-text-stroke:0.3px #1e1e1e;">I can’t believe this weather. It’s awful!</span><span style="position:absolute;left:630px;top:429.67px;white-space:pre;line-height:11.5px;font:400 11.5px 'Liberation Serif', serif;color:#222;transform-origin:0 0;transform:scaleX(0.8889);-webkit-text-stroke:0.3px #222;">JAKE</span><span style="position:absolute;left:677px;top:425.06px;white-space:pre;line-height:17px;font:400 17px 'Liberation Serif', serif;color:#1e1e1e;transform-origin:0 0;transform:scaleX(1.0772);-webkit-text-stroke:0.3px #1e1e1e;">I know. And by the look of those clouds it (1)</span><div style="position:absolute;left:1017px;top:439.40000000000003px;width:138.5999999999999px;height:2px;background:radial-gradient(circle,#3a3c3a 0.85px,transparent 1.15px) 0 0/4.55px 2px repeat-x"></div><span style="position:absolute;left:1161.6px;top:425.06px;white-space:pre;line-height:17px;font:400 17px 'Liberation Serif', serif;color:#1e1e1e;transform-origin:0 0;transform:scaleX(1.0517);-webkit-text-stroke:0.3px #1e1e1e;">(get) worse.</span><span style="position:absolute;left:630px;top:454.67px;white-space:pre;line-height:11.5px;font:400 11.5px 'Liberation Serif', serif;color:#222;transform-origin:0 0;transform:scaleX(0.9451);-webkit-text-stroke:0.3px #222;">CELIA</span><span style="position:absolute;left:677px;top:450.06px;white-space:pre;line-height:17px;font:400 17px 'Liberation Serif', serif;color:#1e1e1e;transform-origin:0 0;transform:scaleX(1.0743);-webkit-text-stroke:0.3px #1e1e1e;">Oh well, this time next week I (2)</span><div style="position:absolute;left:931.7px;top:464.40000000000003px;width:137.29999999999995px;height:2px;background:radial-gradient(circle,#3a3c3a 0.85px,transparent 1.15px) 0 0/4.55px 2px repeat-x"></div><span style="position:absolute;left:1075px;top:450.06px;white-space:pre;line-height:17px;font:400 17px 'Liberation Serif', serif;color:#1e1e1e;transform-origin:0 0;transform:scaleX(1.0924);-webkit-text-stroke:0.3px #1e1e1e;">(sit) on a beach in the sun!</span><span style="position:absolute;left:630px;top:479.67px;white-space:pre;line-height:11.5px;font:400 11.5px 'Liberation Serif', serif;color:#222;transform-origin:0 0;transform:scaleX(0.8889);-webkit-text-stroke:0.3px #222;">JAKE</span><span style="position:absolute;left:677px;top:475.06px;white-space:pre;line-height:17px;font:400 17px 'Liberation Serif', serif;color:#1e1e1e;transform-origin:0 0;transform:scaleX(1.0727);-webkit-text-stroke:0.3px #1e1e1e;">So you’ve booked your holiday then?</span><span style="position:absolute;left:630px;top:504.67px;white-space:pre;line-height:11.5px;font:400 11.5px 'Liberation Serif', serif;color:#222;transform-origin:0 0;transform:scaleX(0.9451);-webkit-text-stroke:0.3px #222;">CELIA</span><span style="position:absolute;left:677px;top:500.06px;white-space:pre;line-height:17px;font:400 17px 'Liberation Serif', serif;color:#1e1e1e;transform-origin:0 0;transform:scaleX(0.9970);-webkit-text-stroke:0.3px #1e1e1e;">Yes. We (3)</span><div style="position:absolute;left:763.5px;top:514.4px;width:137.20000000000005px;height:2px;background:radial-gradient(circle,#3a3c3a 0.85px,transparent 1.15px) 0 0/4.55px 2px repeat-x"></div><span style="position:absolute;left:908px;top:500.06px;white-space:pre;line-height:17px;font:400 17px 'Liberation Serif', serif;color:#1e1e1e;transform-origin:0 0;transform:scaleX(1.0621);-webkit-text-stroke:0.3px #1e1e1e;">(leave) on Sunday.</span><span style="position:absolute;left:630px;top:529.67px;white-space:pre;line-height:11.5px;font:400 11.5px 'Liberation Serif', serif;color:#222;transform-origin:0 0;transform:scaleX(0.8889);-webkit-text-stroke:0.3px #222;">JAKE</span><span style="position:absolute;left:677px;top:525.06px;white-space:pre;line-height:17px;font:400 17px 'Liberation Serif', serif;color:#1e1e1e;transform-origin:0 0;transform:scaleX(1.0228);-webkit-text-stroke:0.3px #1e1e1e;">Lucky you! I (4)</span><div style="position:absolute;left:799.6px;top:539.4px;width:137.19999999999993px;height:2px;background:radial-gradient(circle,#3a3c3a 0.85px,transparent 1.15px) 0 0/4.55px 2px repeat-x"></div><span style="position:absolute;left:944px;top:525.06px;white-space:pre;line-height:17px;font:400 17px 'Liberation Serif', serif;color:#1e1e1e;transform-origin:0 0;transform:scaleX(1.0772);-webkit-text-stroke:0.3px #1e1e1e;">(not think) we’re going to go away this year.</span><span style="position:absolute;left:677px;top:550.06px;white-space:pre;line-height:17px;font:400 17px 'Liberation Serif', serif;color:#1e1e1e;transform-origin:0 0;transform:scaleX(1.0487);-webkit-text-stroke:0.3px #1e1e1e;">Sylvia’s boss has given her a big project. She (5)</span><div style="position:absolute;left:1032.8px;top:564.4px;width:137.20000000000005px;height:2px;background:radial-gradient(circle,#3a3c3a 0.85px,transparent 1.15px) 0 0/4.55px 2px repeat-x"></div><span style="position:absolute;left:1176px;top:550.06px;white-space:pre;line-height:17px;font:400 17px 'Liberation Serif', serif;color:#1e1e1e;transform-origin:0 0;transform:scaleX(1.0835);-webkit-text-stroke:0.3px #1e1e1e;">(work) on it</span><span style="position:absolute;left:677px;top:575.06px;white-space:pre;line-height:17px;font:400 17px 'Liberation Serif', serif;color:#1e1e1e;transform-origin:0 0;transform:scaleX(1.0589);-webkit-text-stroke:0.3px #1e1e1e;">all summer.</span><span style="position:absolute;left:630px;top:604.67px;white-space:pre;line-height:11.5px;font:400 11.5px 'Liberation Serif', serif;color:#222;transform-origin:0 0;transform:scaleX(0.9451);-webkit-text-stroke:0.3px #222;">CELIA</span><span style="position:absolute;left:677px;top:600.06px;white-space:pre;line-height:17px;font:400 17px 'Liberation Serif', serif;color:#1e1e1e;transform-origin:0 0;transform:scaleX(1.0495);-webkit-text-stroke:0.3px #1e1e1e;">That’s a pity.</span><span style="position:absolute;left:630px;top:629.67px;white-space:pre;line-height:11.5px;font:400 11.5px 'Liberation Serif', serif;color:#222;transform-origin:0 0;transform:scaleX(0.8889);-webkit-text-stroke:0.3px #222;">JAKE</span><div style="position:absolute;left:678px;top:626.5px;width:622px;height:17px;background:#88b3d2"></div><span style="position:absolute;left:677px;top:625.06px;white-space:pre;line-height:17px;font:400 17px 'Liberation Serif', serif;color:#1e1e1e;transform-origin:0 0;transform:scaleX(1.0695);-webkit-text-stroke:0.3px #1e1e1e;">Yes. But her boss has promised that he (6)</span><div style="position:absolute;left:991px;top:639.4px;width:137px;height:2px;background:radial-gradient(circle,#3a3c3a 0.85px,transparent 1.15px) 0 0/4.55px 2px repeat-x"></div><span style="position:absolute;left:1135.4px;top:625.06px;white-space:pre;line-height:17px;font:400 17px 'Liberation Serif', serif;color:#1e1e1e;transform-origin:0 0;transform:scaleX(1.0639);-webkit-text-stroke:0.3px #1e1e1e;">(give) her three weeks</span><span style="position:absolute;left:677px;top:650.06px;white-space:pre;line-height:17px;font:400 17px 'Liberation Serif', serif;color:#1e1e1e;transform-origin:0 0;transform:scaleX(1.0803);-webkit-text-stroke:0.3px #1e1e1e;">off in the autumn … Anyway, we should all get together before you leave. How</span><span style="position:absolute;left:677px;top:675.06px;white-space:pre;line-height:17px;font:400 17px 'Liberation Serif', serif;color:#1e1e1e;transform-origin:0 0;transform:scaleX(1.0484);-webkit-text-stroke:0.3px #1e1e1e;">about Friday?</span><span style="position:absolute;left:630px;top:704.67px;white-space:pre;line-height:11.5px;font:400 11.5px 'Liberation Serif', serif;color:#222;transform-origin:0 0;transform:scaleX(0.9451);-webkit-text-stroke:0.3px #222;">CELIA</span><span style="position:absolute;left:677px;top:700.06px;white-space:pre;line-height:17px;font:400 17px 'Liberation Serif', serif;color:#1e1e1e;transform-origin:0 0;transform:scaleX(1.0599);-webkit-text-stroke:0.3px #1e1e1e;">I’m not sure. I (7)</span><div style="position:absolute;left:810px;top:714.4px;width:140px;height:2px;background:radial-gradient(circle,#3a3c3a 0.85px,transparent 1.15px) 0 0/4.55px 2px repeat-x"></div><span style="position:absolute;left:957.3px;top:700.06px;white-space:pre;line-height:17px;font:400 17px 'Liberation Serif', serif;color:#1e1e1e;transform-origin:0 0;transform:scaleX(1.0526);-webkit-text-stroke:0.3px #1e1e1e;">(look) in my diary… Well, I</span><span style="position:absolute;left:677px;top:725.06px;white-space:pre;line-height:17px;font:400 17px 'Liberation Serif', serif;color:#1e1e1e;transform-origin:0 0;transform:scaleX(0.9582);-webkit-text-stroke:0.3px #1e1e1e;">(8)</span><div style="position:absolute;left:702px;top:739.4px;width:139.70000000000005px;height:2px;background:radial-gradient(circle,#3a3c3a 0.85px,transparent 1.15px) 0 0/4.55px 2px repeat-x"></div><span style="position:absolute;left:847.7px;top:725.06px;white-space:pre;line-height:17px;font:400 17px 'Liberation Serif', serif;color:#1e1e1e;transform-origin:0 0;transform:scaleX(1.0865);-webkit-text-stroke:0.3px #1e1e1e;">(not do) anything on Friday but Mario (9)</span><div style="position:absolute;left:1162px;top:739.4px;width:140.70000000000005px;height:2px;background:radial-gradient(circle,#3a3c3a 0.85px,transparent 1.15px) 0 0/4.55px 2px repeat-x"></div><span style="position:absolute;left:677px;top:750.06px;white-space:pre;line-height:17px;font:400 17px 'Liberation Serif', serif;color:#1e1e1e;transform-origin:0 0;transform:scaleX(1.0697);-webkit-text-stroke:0.3px #1e1e1e;">(go) to football training. So it (10)</span><div style="position:absolute;left:932px;top:764.4px;width:138.4000000000001px;height:2px;background:radial-gradient(circle,#3a3c3a 0.85px,transparent 1.15px) 0 0/4.55px 2px repeat-x"></div><span style="position:absolute;left:1077.6px;top:750.06px;white-space:pre;line-height:17px;font:400 17px 'Liberation Serif', serif;color:#1e1e1e;transform-origin:0 0;transform:scaleX(1.0596);-webkit-text-stroke:0.3px #1e1e1e;">(just be) me. Is that OK?</span><span style="position:absolute;left:630px;top:779.67px;white-space:pre;line-height:11.5px;font:400 11.5px 'Liberation Serif', serif;color:#222;transform-origin:0 0;transform:scaleX(0.8889);-webkit-text-stroke:0.3px #222;">JAKE</span><span style="position:absolute;left:677px;top:775.06px;white-space:pre;line-height:17px;font:400 17px 'Liberation Serif', serif;color:#1e1e1e;transform-origin:0 0;transform:scaleX(1.0368);-webkit-text-stroke:0.3px #1e1e1e;">Fine. We (11)</span><div style="position:absolute;left:780px;top:789.4px;width:138.70000000000005px;height:2px;background:radial-gradient(circle,#3a3c3a 0.85px,transparent 1.15px) 0 0/4.55px 2px repeat-x"></div><span style="position:absolute;left:924.8px;top:775.06px;white-space:pre;line-height:17px;font:400 17px 'Liberation Serif', serif;color:#1e1e1e;transform-origin:0 0;transform:scaleX(1.0505);-webkit-text-stroke:0.3px #1e1e1e;">(see) you on Friday. (12)</span><div style="position:absolute;left:1107.7px;top:789.4px;width:140.79999999999995px;height:2px;background:radial-gradient(circle,#3a3c3a 0.85px,transparent 1.15px) 0 0/4.55px 2px repeat-x"></div><span style="position:absolute;left:1254.5px;top:775.06px;white-space:pre;line-height:17px;font:400 17px 'Liberation Serif', serif;color:#1e1e1e;transform-origin:0 0;transform:scaleX(1.0006);-webkit-text-stroke:0.3px #1e1e1e;">(we</span><span style="position:absolute;left:677px;top:800.06px;white-space:pre;line-height:17px;font:400 17px 'Liberation Serif', serif;color:#1e1e1e;transform-origin:0 0;transform:scaleX(1.0689);-webkit-text-stroke:0.3px #1e1e1e;">meet) at seven?</span><span style="position:absolute;left:630px;top:829.67px;white-space:pre;line-height:11.5px;font:400 11.5px 'Liberation Serif', serif;color:#222;transform-origin:0 0;transform:scaleX(0.9451);-webkit-text-stroke:0.3px #222;">CELIA</span><span style="position:absolute;left:677px;top:825.06px;white-space:pre;line-height:17px;font:400 17px 'Liberation Serif', serif;color:#1e1e1e;transform-origin:0 0;transform:scaleX(1.0771);-webkit-text-stroke:0.3px #1e1e1e;">Great. See you then.</span><span style="position:absolute;left:602.3px;top:860.42px;white-space:pre;line-height:21px;font:700 21px 'Liberation Sans', sans-serif;color:#14205a;transform-origin:0 0;transform:scaleX(1.0267);">2</span><span style="position:absolute;left:629.7px;top:867.40px;white-space:pre;line-height:13px;font:700 13px 'Liberation Sans', sans-serif;color:#18245e;transform-origin:0 0;transform:scaleX(1.0060);">UNITS 41, 42 AND 43</span><span style="position:absolute;left:772.6px;top:865.28px;white-space:pre;line-height:15.5px;font:700 15.5px 'Liberation Sans', sans-serif;color:#111111;transform-origin:0 0;transform:scaleX(0.9964);">Read the email and choose the correct words in <i>italics</i>.</span><div style="position:absolute;left:631px;top:897px;width:676px;height:130px;background:#eef5f7;border-radius:6px 6px 0 0;box-shadow:0 0 6px 3px rgba(60,66,60,0.55)"></div><span style="position:absolute;left:643px;top:917.00px;white-space:pre;line-height:13px;font:400 13px 'Liberation Sans', sans-serif;color:#3f7d8c;transform-origin:0 0;transform:scaleX(0.8069);">Subject</span><div style="position:absolute;left:691px;top:912px;width:172px;height:21px;background:#fff;border:1.5px solid #4c5c6c;box-sizing:border-box"></div><span style="position:absolute;left:695px;top:915.50px;white-space:pre;line-height:13px;font:400 13px 'Liberation Sans', sans-serif;color:#222;transform-origin:0 0;transform:scaleX(0.9216);">More money, please!</span><div style="position:absolute;left:1228px;top:924.5px;width:16px;height:4px;background:#1c5a96"></div><div style="position:absolute;left:1255px;top:914px;width:16px;height:14px;border:2px solid #1c5a96;border-top-width:4px;box-sizing:border-box"></div><svg style="position:absolute;left:1283px;top:913px" width="15" height="16"><path d="M1.500 1.500L13.500 14.500M13.500 1.500L1.500 14.500" stroke="#1c5a96" stroke-width="2.600"/></svg><div style="position:absolute;left:631px;top:937px;width:676px;height:1px;background:#b8ccd6"></div><div style="position:absolute;left:631px;top:938px;width:13px;height:90px;background:#dceaf2"></div><div style="position:absolute;left:644px;top:938px;width:638px;height:90px;background:repeating-linear-gradient(0deg,rgba(255,255,255,0.06) 0 1px,transparent 1px 3px),#a0c5e6"></div><div style="position:absolute;left:1282px;top:938px;width:21px;height:90px;background:#ffffff"></div><div style="position:absolute;left:1282px;top:939px;width:21px;height:20px;background:#3a7fc6"></div><svg style="position:absolute;left:1285px;top:943px" width="15" height="10"><path d="M1 9L7.500 2L14 9Z" fill="#1a4a80"/></svg><span style="position:absolute;left:660px;top:964.30px;white-space:pre;line-height:15px;font:400 15px 'Liberation Sans', sans-serif;color:#1e2630;transform-origin:0 0;transform:scaleX(0.9376);">Hi Dad</span><span style="position:absolute;left:660px;top:985.30px;white-space:pre;line-height:15px;font:400 15px 'Liberation Sans', sans-serif;color:#1e2630;transform-origin:0 0;transform:scaleX(0.9544);">I’ve just arrived in Johannesburg so this is my first chance to send an email. (0) <i>I’ll have sent /</i></span><span style="position:absolute;left:660px;top:1006.30px;white-space:pre;line-height:15px;font:400 15px 'Liberation Sans', sans-serif;color:#1e2630;transform-origin:0 0;transform:scaleX(0.9566);"><i>I’ll be sending</i> one to Grandma and Uncle Joe later on today.</span><div style="position:absolute;left:655px;top:1005px;width:95px;height:22px;border:1.5px solid #1e2630;border-radius:11px;box-sizing:border-box"></div><div style="position:absolute;left:0px;top:1020px;width:1920px;height:60px;background:linear-gradient(90deg,#221c2c 0px,#2a1c2a 120px,#3e1a1e 220px,#4a1818 300px,#421a1c 380px,#381c22 470px,#2f1d22 600px,#321c20 860px,#331c20 1150px,#421a1c 1320px,#3a1c20 1500px,#2e1c21 1650px,#3a1e20 1820px,#3e2022 1920px)"></div><svg style="position:absolute;left:24px;top:1034px" width="34" height="30" viewBox="0 0 34 30"><path d="M13 3.500A8.500 8.500 0 1 0 21 16A7 7 0 0 1 13 3.500Z" fill="#f2c230"/><path d="M11 27.500H28A5 5 0 0 0 29 17.500A7 7 0 0 0 16 14.500A6.500 6.500 0 0 0 11 27.500Z" fill="#dfeaf3"/></svg><span style="position:absolute;left:65px;top:1032.30px;white-space:pre;line-height:15px;font:400 15px 'Liberation Sans', sans-serif;color:#ffffff;transform-origin:0 0;transform:scaleX(0.9548);">23°C</span><span style="position:absolute;left:65px;top:1052.30px;white-space:pre;line-height:15px;font:400 15px 'Liberation Sans', sans-serif;color:#e8e8e8;transform-origin:0 0;transform:scaleX(1.0041);">Nhiều mây</span><div style="position:absolute;left:671px;top:1036px;width:14px;height:14px;background:linear-gradient(135deg,#7fd4fb,#1e9bea);border-radius:1.500px"></div><div style="position:absolute;left:686px;top:1036px;width:14px;height:14px;background:linear-gradient(135deg,#7fd4fb,#1e9bea);border-radius:1.500px"></div><div style="position:absolute;left:671px;top:1051px;width:14px;height:14px;background:linear-gradient(135deg,#7fd4fb,#1e9bea);border-radius:1.500px"></div><div style="position:absolute;left:686px;top:1051px;width:14px;height:14px;background:linear-gradient(135deg,#7fd4fb,#1e9bea);border-radius:1.500px"></div><svg style="position:absolute;left:727px;top:1035px" width="30" height="30" viewBox="0 0 30 30"><circle cx="17" cy="12" r="9" fill="#5a4a4a" stroke="#f0e8e8" stroke-width="3"/><path d="M10.500 18.500L3 26" stroke="#f0e8e8" stroke-width="3.500" stroke-linecap="round"/></svg><div style="position:absolute;left:781px;top:1044px;width:22px;height:20px;background:#6e6e6e;border-radius:2px"></div><div style="position:absolute;left:788px;top:1036px;width:23px;height:21px;background:linear-gradient(135deg,#ffffff,#dcdcdc);border-radius:2px"></div><div style="position:absolute;left:788px;top:1044px;width:15px;height:13px;background:#bdbdbd"></div><svg style="position:absolute;left:835px;top:1035px" width="31" height="30" viewBox="0 0 31 30"><path d="M15.500 1A14 14 0 1 1 9 27.500L2 29L4.500 23A14 14 0 0 1 15.500 1Z" fill="#6b67d6"/><rect x="8.500" y="10" width="10" height="10" rx="1.500" fill="#fff"/><path d="M19.500 13.500L23 11V19L19.500 16.500Z" fill="#fff"/></svg><div style="position:absolute;left:881px;top:1025px;width:49px;height:50px;background:rgba(255,255,255,0.08);border-radius:5px"></div><svg style="position:absolute;left:890px;top:1035px" width="32" height="32" viewBox="0 0 32 32"><defs><linearGradient id="eg1" x1="0" y1="1" x2="1" y2="0"><stop offset="0" stop-color="#0c59a4"/><stop offset="1" stop-color="#1ba1e2"/></linearGradient><linearGradient id="eg2" x1="0" y1="0" x2="1" y2="1"><stop offset="0" stop-color="#3dbde0"/><stop offset="1" stop-color="#5ad36c"/></linearGradient></defs><circle cx="16" cy="16" r="15" fill="url(#eg1)"/><path d="M3 11Q7 2 17 1.500Q28 2 30.500 13Q31 20 25 22Q20 23 19 19Q21 15 17 11Q12 8 7 12Z" fill="url(#eg2)"/><path d="M8 17Q10 11 16 12Q20 14 19 18Q16 19 13 18Q10 20 8 17Z" fill="#0f3d7a"/></svg><div style="position:absolute;left:896px;top:1070px;width:20px;height:3.5px;background:#4aa6f0;border-radius:2px"></div><svg style="position:absolute;left:945px;top:1035px" width="32" height="30" viewBox="0 0 32 30"><path d="M1 3Q1 1 3 1H11L14 4H29Q31 4 31 6V27Q31 29 29 29H3Q1 29 1 27Z" fill="#e9b52b"/><rect x="1" y="7" width="30" height="22" rx="2" fill="#fcd55a"/><rect x="6" y="19" width="20" height="10" rx="1.500" fill="#1f7ad0"/><rect x="9" y="22" width="14" height="1.800" fill="#0d4f95"/></svg><div style="position:absolute;left:957px;top:1070px;width:8px;height:3.5px;background:#9c9090;border-radius:2px"></div><svg style="position:absolute;left:1000px;top:1034px" width="32" height="31" viewBox="0 0 32 31"><path d="M1 12L16 1L31 12Z" fill="#1a6fc0"/><rect x="1" y="12" width="30" height="18" fill="#2ea8ec"/><path d="M5 9L16 18L27 9V7H5Z" fill="#f4ebe0"/><path d="M1 12L16 24L31 12V30H1Z" fill="#35b4f4"/></svg><svg style="position:absolute;left:1055px;top:1034px" width="32" height="31" viewBox="0 0 32 31"><defs><linearGradient id="pg" x1="0" y1="1" x2="1" y2="0"><stop offset="0" stop-color="#2a4de8"/><stop offset="0.55" stop-color="#9a2ec0"/><stop offset="1" stop-color="#f2243a"/></linearGradient></defs><rect width="32" height="31" fill="url(#pg)"/><path d="M10 24Q6 19 8 12Q11 6 17 6Q24 7 25 14L26 18H24V22H19V25" stroke="#f4d8f4" stroke-width="1.600" fill="none"/><circle cx="16.500" cy="14" r="4" stroke="#f4d8f4" stroke-width="1.500" fill="none"/></svg><svg style="position:absolute;left:1110px;top:1037px" width="31" height="27" viewBox="0 0 31 27"><rect x="1" y="2" width="13" height="11" rx="1" fill="#f2eeee"/><rect x="16" y="1" width="14" height="12" rx="1" fill="#f2eeee"/><rect x="8" y="14" width="14" height="12" rx="1" fill="#f2eeee"/><text x="7.500" y="11" text-anchor="middle" font-size="8" font-weight="700" font-family="Liberation Sans" fill="#d02020">u</text><text x="23" y="10" text-anchor="middle" font-size="8" font-weight="700" font-family="Liberation Sans" fill="#d02020">i</text><text x="15" y="23" text-anchor="middle" font-size="8" font-weight="700" font-family="Liberation Sans" fill="#d02020">n</text></svg><svg style="position:absolute;left:1165px;top:1035px" width="40" height="35" viewBox="0 0 40 35"><circle cx="15" cy="15" r="14" fill="#34a853"/><path d="M15 1A14 14 0 0 1 27.100 8H15Z M15 1A14 14 0 0 0 2.900 8L9 18.500Z" fill="#ea4335"/><path d="M27.100 8A14 14 0 0 1 15 29L21 18.500Z" fill="#fbc02d"/><circle cx="15" cy="15" r="6.500" fill="#fff"/><circle cx="15" cy="15" r="5" fill="#4285f4"/><circle cx="28" cy="9" r="8.500" fill="#5e4337"/><text x="28" y="13.500" text-anchor="middle" font-size="11" font-family="Liberation Sans" fill="#efe3d8">L</text><circle cx="24" cy="22.500" r="7" fill="#5e4337"/><text x="24" y="26.500" text-anchor="middle" font-size="10" font-family="Liberation Sans" fill="#efe3d8">L</text></svg><div style="position:absolute;left:1177px;top:1070px;width:8px;height:3.5px;background:#9c9090;border-radius:2px"></div><svg style="position:absolute;left:1220px;top:1035px" width="31" height="30" viewBox="0 0 31 30"><circle cx="15.500" cy="15" r="15" fill="#15c39a"/><path d="M21.500 9.500A8 8 0 1 0 22.500 18.500H17.500" stroke="#fff" stroke-width="2.600" fill="none"/><path d="M21 15.500L23.500 19.500L19.500 21" stroke="#fff" stroke-width="2.400" fill="none"/></svg><div style="position:absolute;left:1232px;top:1070px;width:8px;height:3.5px;background:#9c9090;border-radius:2px"></div><svg style="position:absolute;left:1632px;top:1044px" width="19" height="11"><path d="M1 10L9.500 1.500L18 10" stroke="#f0f0f0" stroke-width="1.300" fill="none"/></svg><span style="position:absolute;left:1672px;top:1032.10px;white-space:pre;line-height:15px;font:400 15px 'Liberation Sans', sans-serif;color:#ffffff;transform-origin:0 0;transform:scaleX(0.8682);">VIE</span><span style="position:absolute;left:1676px;top:1052.30px;white-space:pre;line-height:15px;font:400 15px 'Liberation Sans', sans-serif;color:#ffffff;transform-origin:0 0;transform:scaleX(0.8564);">TL</span><svg style="position:absolute;left:1721px;top:1041px" width="21" height="17" viewBox="0 0 21 17"><path d="M1 6A13 13 0 0 1 20 6M4 9.500A8.500 8.500 0 0 1 17 9.500M7 12.500A4.500 4.500 0 0 1 14 12.500" stroke="#f0f0f0" stroke-width="1.600" fill="none"/><circle cx="10.500" cy="15.300" r="1.500" fill="#f0f0f0"/></svg><svg style="position:absolute;left:1750px;top:1040px" width="22" height="19" viewBox="0 0 22 19"><path d="M1 6.500H5L10 2V17L5 12.500H1Z" stroke="#f0f0f0" stroke-width="1.400" fill="none" stroke-linejoin="round"/><path d="M13 6.500Q15 9.500 13 12.500M16 4Q19.500 9.500 16 15M18.500 1.500Q23 9.500 18.500 17.500" stroke="#f0f0f0" stroke-width="1.400" fill="none"/></svg><svg style="position:absolute;left:1780px;top:1040px" width="23" height="19" viewBox="0 0 23 19"><rect x="5" y="5" width="15" height="11" rx="1.500" stroke="#f0f0f0" stroke-width="1.600" fill="none"/><rect x="7" y="7" width="11" height="7" fill="#f0f0f0"/><rect x="20" y="8.500" width="2" height="4" fill="#f0f0f0"/><path d="M2.500 1V5M5.500 1V5M1.500 5H6.500V8Q6.500 10 4 10Q1.500 10 1.500 8Z M4 10V18" stroke="#f0f0f0" stroke-width="1.300" fill="none"/></svg><span style="position:absolute;left:1844px;top:1031.30px;white-space:pre;line-height:15px;font:400 15px 'Liberation Sans', sans-serif;color:#ffffff;transform-origin:0 0;transform:scaleX(0.9449);">6:55 CH</span><span style="position:absolute;left:1821px;top:1050.90px;white-space:pre;line-height:15px;font:400 15px 'Liberation Sans', sans-serif;color:#ffffff;transform-origin:0 0;transform:scaleX(0.9856);">10/03/2022</span>
</body></html>
